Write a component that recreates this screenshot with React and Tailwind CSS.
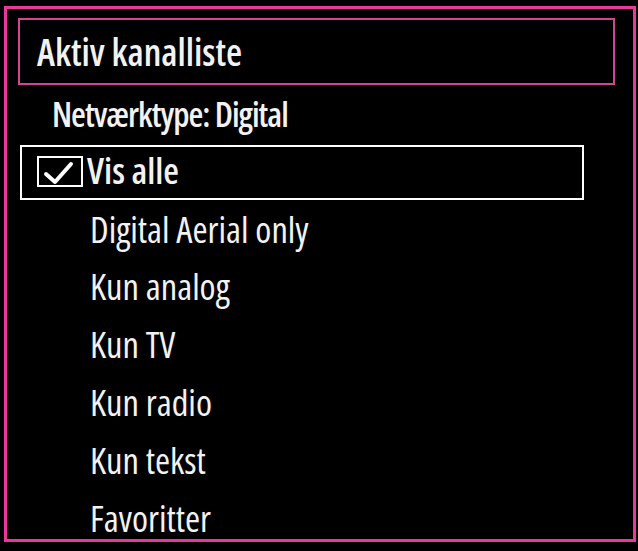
import React from 'react';

const items = ['Digital Aerial only', 'Kun analog', 'Kun TV', 'Kun radio', 'Kun tekst', 'Favoritter'];

// Checkbox glyph in front of the selected entry
const CheckBox = () => (
  <div className="w-[46px] h-[31px] border-2 border-white shrink-0 -mt-[3px]">
    <svg width="42" height="27" viewBox="0 0 42 27" fill="none">
      <path d="M7 16 L16 24 L32 6" stroke="white" strokeWidth="4" strokeLinecap="round" strokeLinejoin="round" />
    </svg>
  </div>
);

const App = () => {
  return (
    <div className="w-[638px] h-[551px] bg-black pt-[6px] pl-[4px] text-[#f2f2f2] font-['Open_Sans',sans-serif] font-stretch-condensed overflow-hidden">
      <div className="w-[632px] h-[536px] border-[3px] border-[#e8389a] flex flex-col overflow-hidden">
        {/* Title */}
        <div className="shrink-0 mt-[9px] ml-[11px] w-[597px] h-[67px] border-2 border-[#cf4792] flex items-center pl-[17px]">
          <span className="text-[37px] font-semibold leading-none">Aktiv kanalliste</span>
        </div>

        {/* Network type */}
        <div className="shrink-0 h-[60px] flex items-center pl-[45px] pb-[3px]">
          <span className="text-[34px] font-semibold leading-none tracking-[-1px]">Netværktype: Digital</span>
        </div>

        {/* Selected entry */}
        <div className="shrink-0 ml-[13px] w-[564px] h-[55px] border-2 border-white flex items-center pl-[15px] gap-[4px]">
          <CheckBox />
          <span className="text-[36px] font-semibold leading-none -mt-[3px]">Vis alle</span>
        </div>

        {/* Remaining list */}
        <div className="shrink-0 flex flex-col">
          {items.map((item) => (
            <div key={item} className="shrink-0 h-[57.8px] flex items-center pl-[83px]">
              <span className="text-[36.5px] font-medium leading-none">{item}</span>
            </div>
          ))}
        </div>
      </div>
    </div>
  );
};

export default App;
